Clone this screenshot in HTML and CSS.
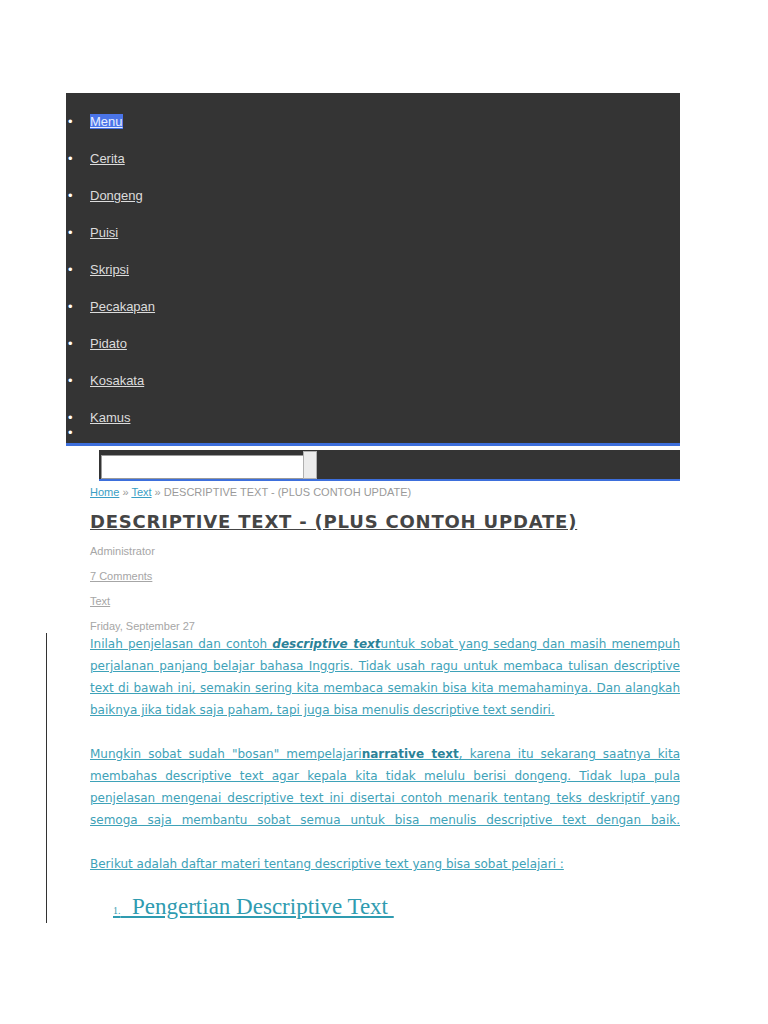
FILE: index.html
```html
<!DOCTYPE html>
<html lang="id">
<head>
<meta charset="utf-8">
<title>Descriptive Text - (Plus Contoh Update)</title>
<link rel="stylesheet" href="styles.css">
</head>
<body>
<div class="page">
  <ul class="menu">
    <li><a href="#" class="current">Menu</a></li>
    <li><a href="#">Cerita</a></li>
    <li><a href="#">Dongeng</a></li>
    <li><a href="#">Puisi</a></li>
    <li><a href="#">Skripsi</a></li>
    <li><a href="#">Pecakapan</a></li>
    <li><a href="#">Pidato</a></li>
    <li><a href="#">Kosakata</a></li>
    <li><a href="#">Kamus</a></li>
    <li class="empty"></li>
  </ul>
  <form class="search">
    <input class="search-input" type="text">
    <button class="search-btn" type="button"></button>
  </form>
  <div class="content">
    <div class="crumbs"><a href="#">Home</a> » <a href="#">Text</a> » DESCRIPTIVE TEXT - (PLUS CONTOH UPDATE)</div>
    <h1 class="title"><a href="#">DESCRIPTIVE TEXT - (PLUS CONTOH UPDATE)</a></h1>
    <div class="meta">Administrator</div>
    <div class="meta"><a href="#">7 Comments</a></div>
    <div class="meta"><a href="#">Text</a></div>
    <div class="meta meta-last">Friday, September 27</div>
    <div class="post-body">
      <p class="para">Inilah penjelasan dan contoh <b><i>descriptive text</i></b>untuk sobat yang sedang dan masih menempuh perjalanan panjang belajar bahasa Inggris. Tidak usah ragu untuk membaca tulisan descriptive text di bawah ini, semakin sering kita membaca semakin bisa kita memahaminya. Dan alangkah baiknya jika tidak saja paham, tapi juga bisa menulis descriptive text sendiri.</p>
      <p class="para para-full">Mungkin sobat sudah "bosan" mempelajari<b>narrative text</b>, karena itu sekarang saatnya kita membahas descriptive text agar kepala kita tidak melulu berisi dongeng. Tidak lupa pula penjelasan mengenai descriptive text ini disertai contoh menarik tentang teks deskriptif yang semoga saja membantu sobat semua untuk bisa menulis descriptive text dengan baik.</p>
      <p class="para para-last">Berikut adalah daftar materi tentang descriptive text yang bisa sobat pelajari :</p>
      <h2 class="toc"><a href="#"><span class="num">1.</span>&nbsp; Pengertian Descriptive Text&nbsp;</a></h2>
    </div>
  </div>
</div>
</body>
</html>
```
FILE: styles.css
```css
html, body {
  margin: 0;
  padding: 0;
  background: #ffffff;
}

.page {
  margin: 93px 0 0 66px;
  width: 614px;
  font-family: "Liberation Sans", Arial, sans-serif;
}

.menu {
  list-style: none;
  margin: 0;
  padding: 21px 0 3px 0;
  background: #343434;
  border-bottom: 3px solid #3d6fdc;
}

.menu li {
  display: flex;
  align-items: center;
  line-height: 15px;
  height: 15px;
  font-size: 13px;
  margin-top: 22px;
}

.menu li:first-child {
  margin-top: 0;
}

.menu li.empty {
  margin-top: 0;
}

.menu li::before {
  content: "\2022";
  color: #ffffff;
  width: 22px;
  padding-left: 2px;
  flex: none;
  font-size: 13px;
  line-height: 15px;
}

.menu a {
  color: #dcdcdc;
  text-decoration: underline;
}

.menu a.current {
  background: #4a74e8;
  color: #e6eeff;
}

.search {
  display: flex;
  align-items: flex-end;
  margin: 4px 0 0 33px;
  padding: 1px 0 0 2px;
  background: #343434;
  border-bottom: 2px solid #3d6fdc;
  height: 28px;
}

.search-input {
  box-sizing: border-box;
  width: 202px;
  height: 24px;
  margin: 0;
  padding: 0;
  background: #ffffff;
  border: 1px solid #9a9a9a;
  border-right: none;
}

.search-btn {
  box-sizing: border-box;
  width: 14px;
  height: 28px;
  margin: 0;
  padding: 0;
  background: #ececec;
  border: 1px solid #b0b0b0;
}

.content {
  padding-left: 24px;
}

.crumbs {
  margin-top: 4px;
  font-size: 11px;
  line-height: 14px;
  color: #9a9a9a;
}

.crumbs a {
  color: #3a9ec4;
}

.title {
  margin: 11px 0 10px 0;
  font-family: "DejaVu Sans", Verdana, sans-serif;
  font-size: 18px;
  line-height: 24px;
  font-weight: bold;
  letter-spacing: 0.8px;
}

.title a {
  color: #454545;
}

.meta {
  font-size: 11px;
  line-height: 14px;
  color: #a6a6a6;
  margin-bottom: 11px;
}

.meta-last {
  margin-bottom: 0;
}

.meta a {
  color: #a6a6a6;
}

.post-body {
  margin-left: -44px;
  padding-left: 43px;
  border-left: 1px solid #333333;
}

.para {
  margin: 0 0 22px 0;
  font-family: "DejaVu Sans", Verdana, sans-serif;
  font-size: 12px;
  line-height: 22px;
  color: #3ea2b8;
  text-decoration: underline;
  text-align: justify;
}

.para b {
  color: #2b8298;
}

.para-full {
  text-align-last: justify;
}

.para-last {
  margin-bottom: 20px;
}

.toc {
  margin: 0 0 0 23px;
  font-family: "Liberation Serif", "Times New Roman", serif;
  font-size: 23px;
  line-height: 24px;
  font-weight: normal;
}

.toc a {
  color: #2f9bb0;
}

.toc .num {
  font-size: 10px;
}
```
